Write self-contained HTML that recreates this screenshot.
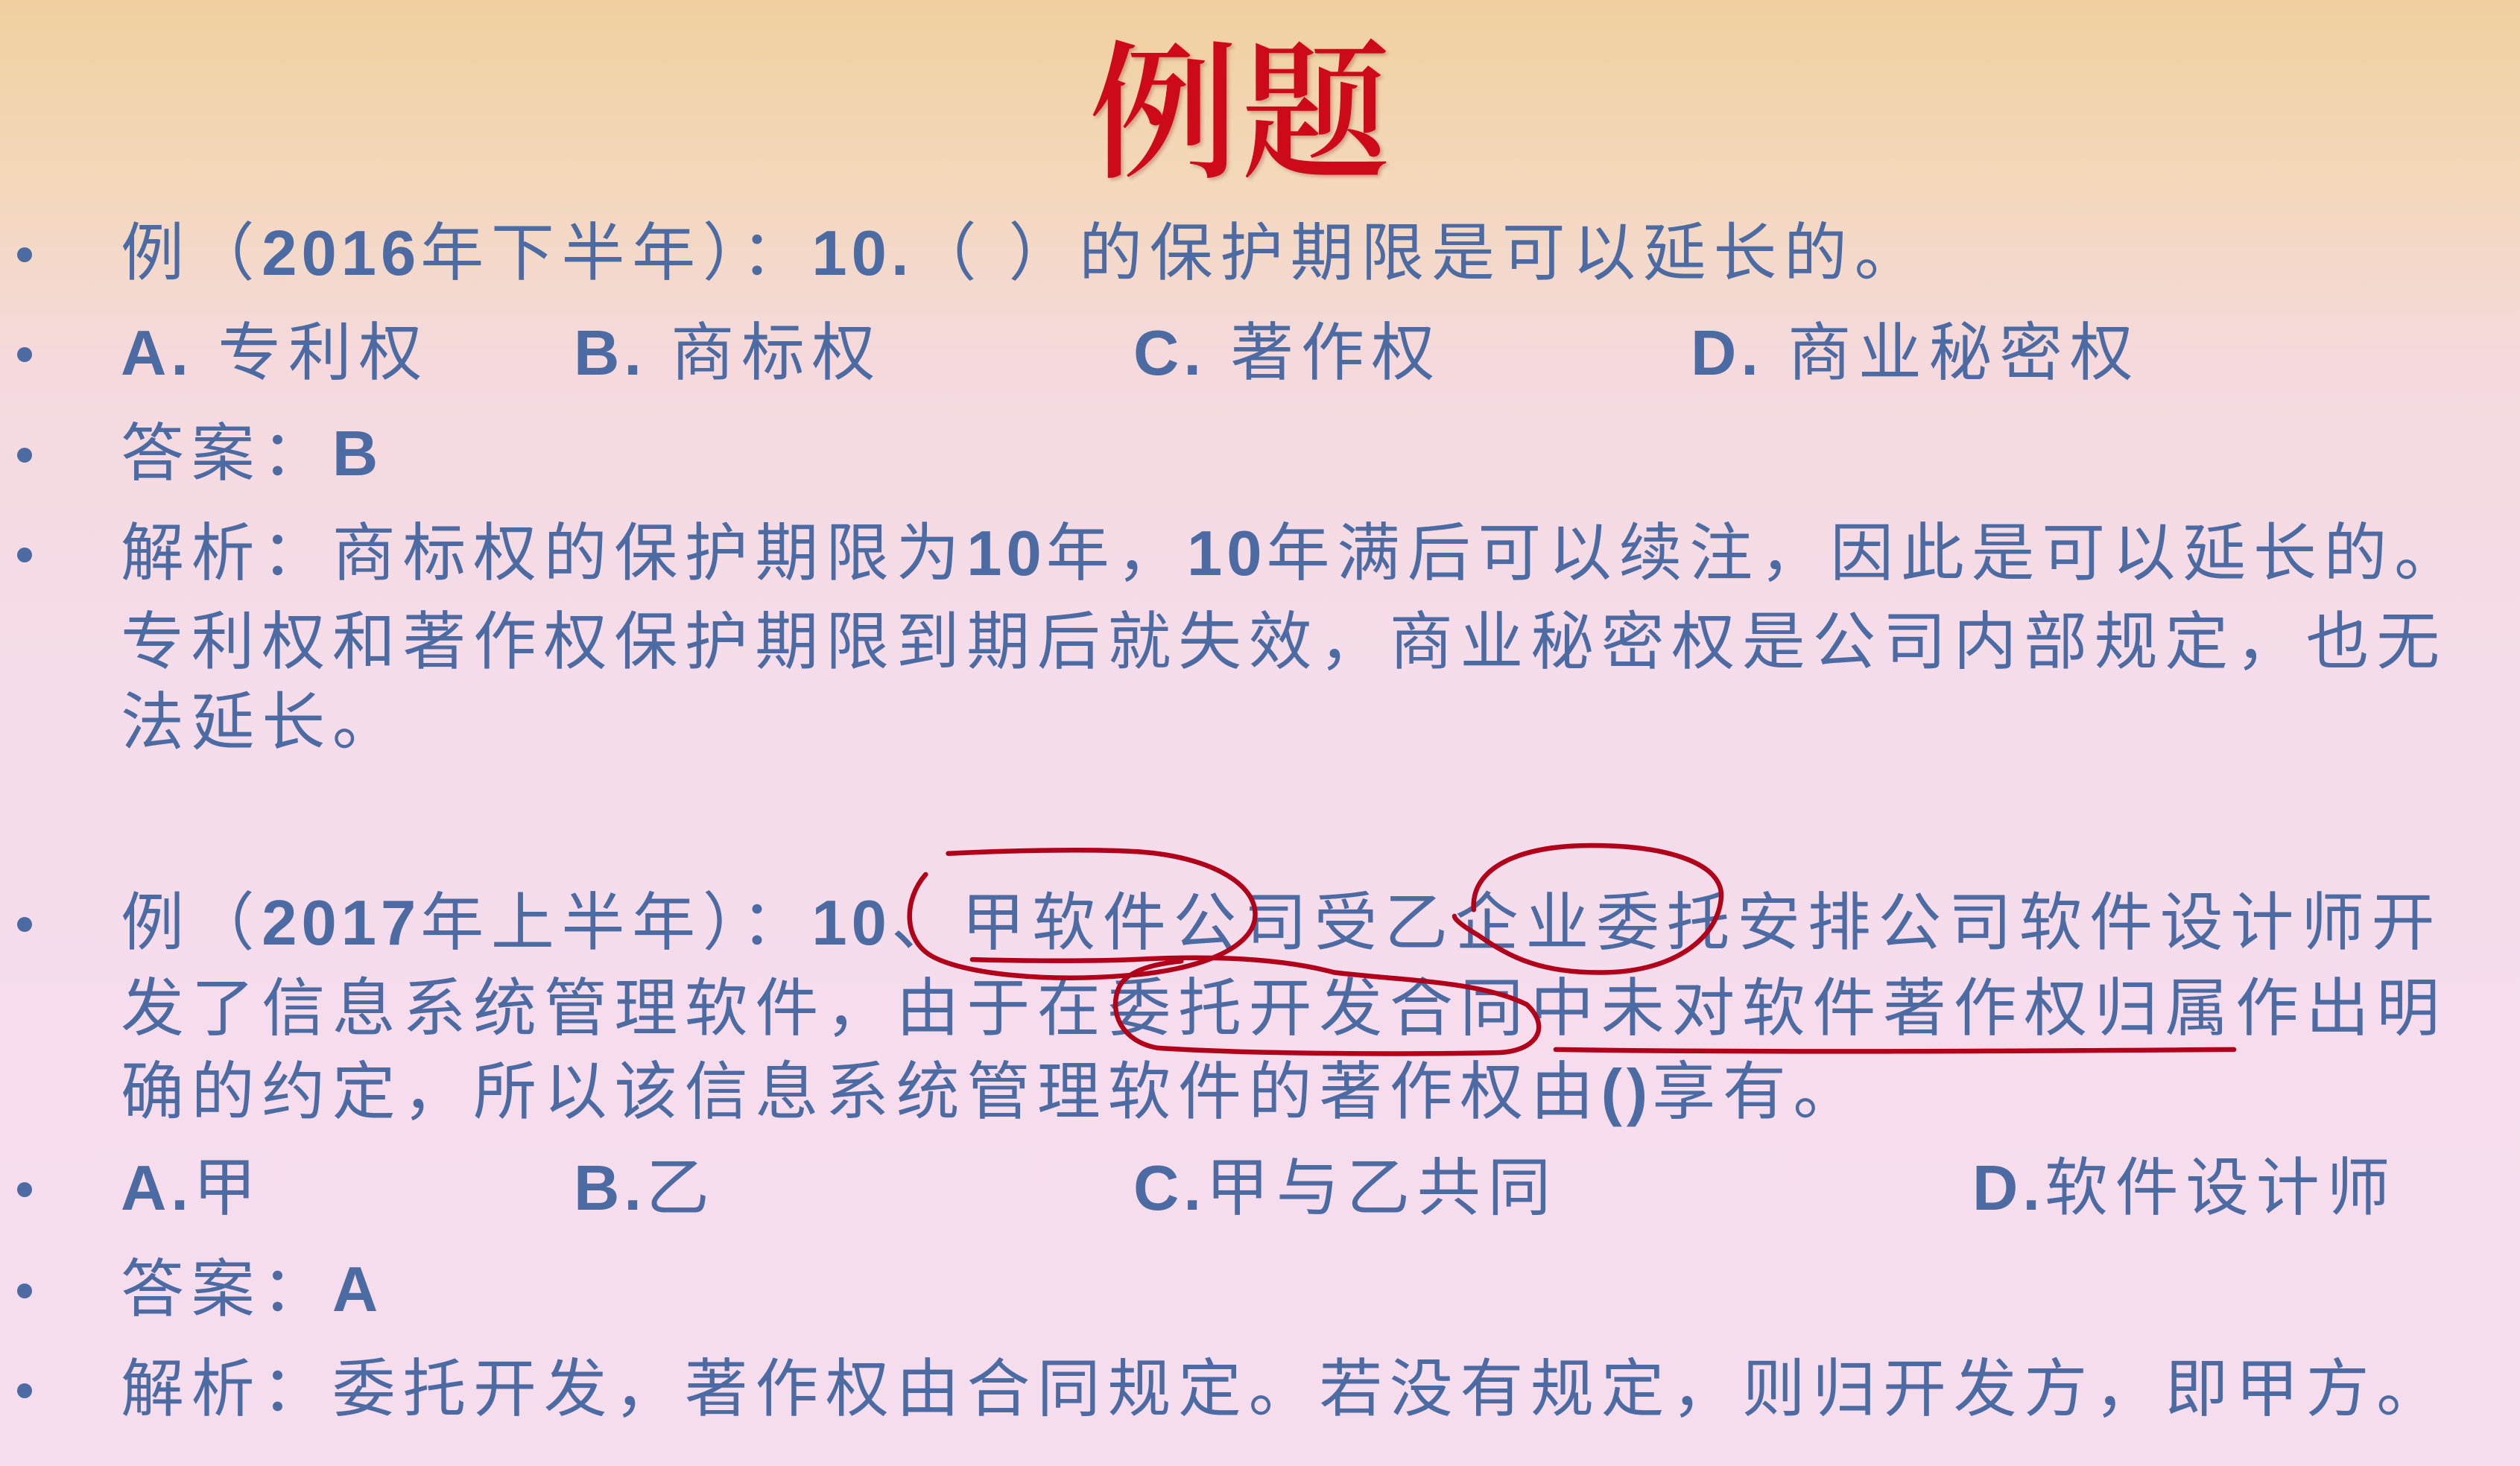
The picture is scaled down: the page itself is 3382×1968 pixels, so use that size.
<!DOCTYPE html>
<html><head><meta charset="utf-8"><style>
html,body{margin:0;padding:0}
body{width:3382px;height:1968px;position:relative;overflow:hidden;
background:linear-gradient(180deg,#f0d09e 0px,#f3d8bc 250px,#f5d9dc 480px,#f5dcea 900px,#f6ddee 1968px);
font-family:"Liberation Sans","Noto Sans CJK SC",sans-serif;}
.t{position:absolute;left:1462px;top:36px;font-family:"Liberation Serif","Noto Serif CJK SC",serif;font-weight:600;font-size:200px;line-height:240px;color:#cc0a1a;letter-spacing:4px;text-shadow:3px 3px 4px rgba(120,0,0,.25);white-space:nowrap}
.l{position:absolute;left:162px;font-size:85px;line-height:100px;height:100px;color:#4d6ba3;letter-spacing:9.6px;white-space:nowrap}
.l b{font-weight:700;letter-spacing:6px}
.d{position:absolute;left:23px;width:20px;height:20px;border-radius:50%;background:#4d6ba3}
.o{position:absolute}
</style></head><body>
<div class="t">例题</div>

<div class="d" style="top:332px"></div>
<div class="l" style="top:291px">例（<b>2016</b>年下半年）：<b>10.</b>（ ）的保护期限是可以延长的。</div>
<div class="d" style="top:466px"></div>
<div class="l" style="top:425px"><b>A.</b>&nbsp;专利权</div>
<div class="l" style="top:425px;left:770px"><b>B.</b>&nbsp;商标权</div>
<div class="l" style="top:425px;left:1521px"><b>C.</b>&nbsp;著作权</div>
<div class="l" style="top:425px;left:2269px"><b>D.</b>&nbsp;商业秘密权</div>
<div class="d" style="top:601px"></div>
<div class="l" style="top:560px">答案：<b>B</b></div>
<div class="d" style="top:735px"></div>
<div class="l" style="top:694px">解析：商标权的保护期限为<b>10</b>年，<b>10</b>年满后可以续注，因此是可以延长的。</div>
<div class="l" style="top:813px">专利权和著作权保护期限到期后就失效，商业秘密权是公司内部规定，也无</div>
<div class="l" style="top:921px">法延长。</div>

<div class="d" style="top:1231px"></div>
<div class="l" style="top:1190px">例（<b>2017</b>年上半年）：<b>10</b>、甲软件公司受乙企业委托安排公司软件设计师开</div>
<div class="l" style="top:1305px">发了信息系统管理软件，由于在委托开发合同中未对软件著作权归属作出明</div>
<div class="l" style="top:1417px">确的约定，所以该信息系统管理软件的著作权由<b>()</b>享有。</div>
<div class="d" style="top:1587px"></div>
<div class="l" style="top:1546px"><b>A.</b>甲</div>
<div class="l" style="top:1546px;left:770px"><b>B.</b>乙</div>
<div class="l" style="top:1546px;left:1521px"><b>C.</b>甲与乙共同</div>
<div class="l" style="top:1546px;left:2647px"><b>D.</b>软件设计师</div>
<div class="d" style="top:1723px"></div>
<div class="l" style="top:1682px">答案：<b>A</b></div>
<div class="d" style="top:1857px"></div>
<div class="l" style="top:1816px">解析：委托开发，著作权由合同规定。若没有规定，则归开发方，即甲方。</div>

<svg class="o" style="left:0;top:0" width="3382" height="1968" viewBox="0 0 1568 912" fill="none" stroke="#b0001a" stroke-width="3" stroke-linecap="round">
<path d="M590 531 C630 529 680 528 710 530 C750 533 780 548 781 568 C782 590 745 604 700 607 C650 611 600 606 580 595 C562 585 562 560 576 544"/>
<path d="M605 597 C640 598 680 598 705 597"/>
<path d="M917 566 C915 540 945 526 990 526 C1040 526 1072 538 1071 558 C1069 585 1040 604 1000 605 C960 606 940 596 920 582 C910 576 905 572 905 570"/>
<path d="M705 597 C760 594 800 597 830 605 C870 610 920 610 950 625 C966 640 955 655 930 655 C880 656 780 656 720 652 C698 648 690 630 696 615 C700 605 715 600 735 598"/>
<path d="M968 653 C1100 655 1250 654 1390 653"/>
</svg>
</body></html>
